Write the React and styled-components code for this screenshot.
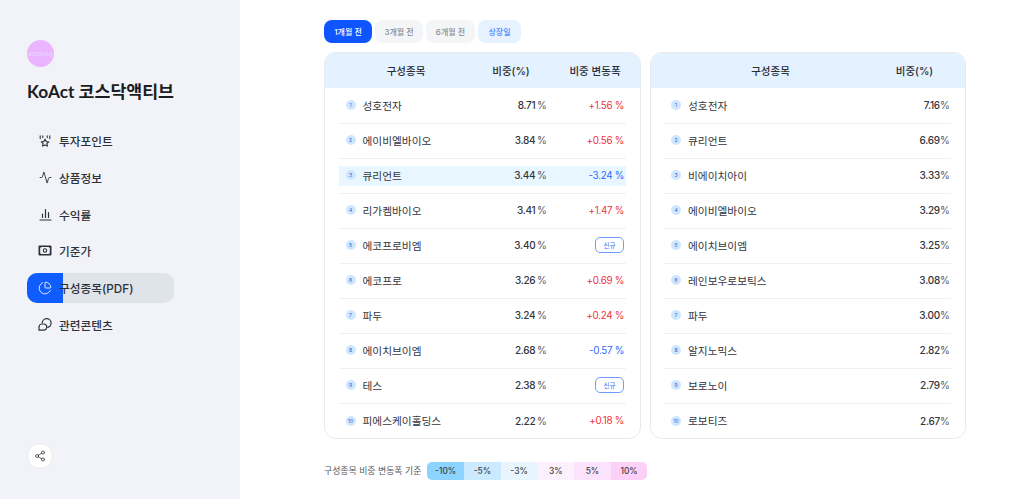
import React from 'react';
import styled, { createGlobalStyle } from 'styled-components';
import { Activity, ChartPie, Share2 } from 'lucide-react';

const GlobalStyle = createGlobalStyle`
  html, body {
    margin: 0;
    padding: 0;
    height: 100%;
    background: #fff;
    font-family: Inter, "Noto Sans CJK KR", sans-serif;
    color: #222;
  }
  #root { height: 100%; }
  * { box-sizing: border-box; }
`;

const Page = styled.div`
  display: flex;
  width: 1024px;
  height: 499px;
  overflow: hidden;
`;

const Sidebar = styled.aside`
  width: 240px;
  flex: none;
  background: #f1f3f9;
  padding: 40px 27px 0;
  display: flex;
  flex-direction: column;
`;

const Badge = styled.div`
  width: 27px;
  height: 27px;
  border-radius: 50%;
  background: #ebb4fe;
  color: #e6d6ff;
  font-family: "Liberation Sans", sans-serif;
  font-size: 5.6px;
  font-weight: 700;
  display: flex;
  align-items: center;
  justify-content: center;
`;

const Title = styled.h1`
  margin: 12px 0 0;
  font-family: Lato, "Noto Sans CJK KR", sans-serif;
  font-size: 17.3px;
  line-height: 25px;
  font-weight: 700;
  color: #1d1d1f;
  white-space: nowrap;
`;

const Nav = styled.nav`
  margin-top: 21.5px;
  display: flex;
  flex-direction: column;
  gap: 6.8px;
`;

const NavItem = styled.div`
  position: relative;
  display: flex;
  align-items: center;
  gap: 7px;
  width: 147px;
  height: 30px;
  padding-left: 11px;
  border-radius: 10px;
  font-size: 11.7px;
  font-weight: 500;
  color: #2d3138;
  white-space: nowrap;
  background: ${p => (p.$active ? '#dfe3ea' : 'transparent')};
`;

const ActiveMark = styled.span`
  position: absolute;
  left: 0;
  top: 0;
  width: 36px;
  height: 30px;
  background: #0f5cff;
  border-radius: 10px 0 0 10px;
`;

const NavIcon = styled.span`
  position: relative;
  width: 14px;
  flex: none;
  display: flex;
  justify-content: center;
  color: ${p => (p.$active ? '#fff' : '#2d3138')};

  svg {
    flex: none;
  }
`;

const NavLabel = styled.span`
  position: relative;
`;

const ShareButton = styled.button`
  margin-top: auto;
  margin-bottom: 30px;
  width: 26px;
  height: 26px;
  padding: 0;
  border: 1px solid #e8eaf0;
  border-radius: 50%;
  background: #fff;
  color: #333;
  display: flex;
  align-items: center;
  justify-content: center;
`;

const Main = styled.main`
  flex: 1;
  padding: 20px 0 0 84px;
`;

const Tabs = styled.div`
  display: flex;
  gap: 3px;
  height: 23px;
`;

const Tab = styled.div`
  height: 23px;
  width: ${p => p.$width}px;
  border-radius: 8px;
  display: flex;
  align-items: center;
  justify-content: center;
  font-size: 8px;
  font-weight: 500;
  background: ${p => (p.$kind === 'active' ? '#0f55ff' : p.$kind === 'info' ? '#e6f2ff' : '#f4f5f7')};
  color: ${p => (p.$kind === 'active' ? '#fff' : p.$kind === 'info' ? '#4f8cff' : '#8a8d93')};
`;

const Tables = styled.div`
  display: flex;
  gap: 9px;
  margin-top: 9px;
`;

const Card = styled.section`
  width: ${p => p.$width}px;
  height: 387px;
  border: 1px solid #e6e9ee;
  border-radius: 12px;
  overflow: hidden;
`;

const HeaderRow = styled.div`
  height: 35px;
  background: #e4f1ff;
  display: grid;
  grid-template-columns: ${p => p.$cols};
  align-items: center;
  padding-left: 14px;
  font-size: 10.5px;
  font-weight: 500;
  color: #2a2d33;
`;

const HeadCell = styled.div`
  text-align: center;
  white-space: nowrap;
`;

const Body = styled.div`
  padding: 1px 13.5px 0;
`;

const Row = styled.div`
  height: 35px;
  display: flex;
  align-items: center;
  border-bottom: ${p => (p.$last ? 'none' : '1px solid #eef0f3')};
`;

const RowInner = styled.div`
  flex: 1;
  height: ${p => (p.$highlight ? '20px' : 'auto')};
  padding-bottom: 2px;
  display: grid;
  grid-template-columns: ${p => p.$cols};
  align-items: center;
  background: ${p => (p.$highlight ? '#e8f6ff' : 'transparent')};
`;

const NameCell = styled.div`
  display: flex;
  align-items: center;
  gap: 7px;
  padding-left: 7px;
  font-size: 10.7px;
  color: #33363c;
  white-space: nowrap;
`;

const Rank = styled.span`
  width: 10px;
  height: 10px;
  border-radius: 50%;
  background: #cfe6ff;
  color: #2f5fd0;
  font-size: 5px;
  display: flex;
  align-items: center;
  justify-content: center;
  flex: none;
`;

const Weight = styled.div`
  text-align: right;
  padding-right: ${p => p.$inset || 0}px;
  font-size: 10px;
  font-weight: 500;
  letter-spacing: -0.25px;
  color: #33363c;
  white-space: nowrap;
`;

const Unit = styled.span`
  margin-left: ${p => p.$gap}px;
  font-weight: 400;
  color: #55585f;
`;

const Change = styled.div`
  display: flex;
  justify-content: flex-end;
  padding-right: 2px;
  font-size: 9.8px;
  letter-spacing: -0.3px;
  white-space: nowrap;
  color: ${p => (p.$down ? '#2c6bff' : '#f0323c')};
`;

const NewTag = styled.span`
  width: 29px;
  height: 16px;
  border: 1px solid #6f9dff;
  border-radius: 5px;
  background: #fff;
  color: #2c6bff;
  font-size: 6.5px;
  letter-spacing: 0;
  display: flex;
  align-items: center;
  justify-content: center;
`;

const Legend = styled.div`
  margin-top: 23px;
  display: flex;
  align-items: center;
  gap: 6px;
`;

const LegendLabel = styled.span`
  font-size: 8.9px;
  color: #555960;
  white-space: nowrap;
  padding-bottom: 1px;
`;

const Scale = styled.div`
  display: flex;
  height: 18px;
  border-radius: 5px;
  overflow: hidden;
`;

const Step = styled.span`
  width: 36.7px;
  background: ${p => p.$bg};
  color: #3a3d44;
  font-size: 8.4px;
  font-weight: 500;
  display: flex;
  align-items: center;
  justify-content: center;
`;

const PointIcon = () => (
  <svg width="12" height="12" viewBox="0 0 12 12" fill="none" stroke="currentColor" strokeWidth="1.1" strokeLinecap="round" strokeLinejoin="round">
    <path d="M1.200.8v2.800M10.800.8v2.800M3.800.8v1.800M8.200.8v1.800" />
    <path d="M6 4.300l1.200 2.300 2.500.3-1.800 1.700.5 2.500L6 9.900l-2.400 1.200.5-2.500-1.800-1.700 2.500-.3z" />
  </svg>
);

const BarsIcon = () => (
  <svg width="13" height="13" viewBox="0 0 13 13" fill="none" stroke="currentColor" strokeWidth="1.2" strokeLinecap="round">
    <path d="M1 12h11M3.500 9.500V6M6.500 9.500V1.500M9.500 9.500V4.500" />
  </svg>
);

const CashIcon = () => (
  <svg width="14" height="11" viewBox="0 0 14 11" fill="none">
    <rect x=".5" y=".5" width="13" height="10" rx="1" fill="currentColor" />
    <rect x="2.200" y="2.100" width="9.600" height="6.800" rx="1.500" fill="#f1f3f9" />
    <circle cx="7" cy="5.500" r="1.700" stroke="currentColor" strokeWidth="1.100" />
  </svg>
);

const ContentIcon = () => (
  <svg width="14" height="13" viewBox="0 0 14 13" fill="none" stroke="currentColor" strokeWidth="1.2" strokeLinejoin="round">
    <path d="M4.300 5.200a4.400 4.400 0 1 1 5 4.200" />
    <path d="M1 12.200V9a3 3 0 0 1 3-3h1.600a3.100 3.100 0 0 1 0 6.200z" />
  </svg>
);

const navItems = [
  { label: '투자포인트', icon: <PointIcon /> },
  { label: '상품정보', icon: <Activity size={13} strokeWidth={1.7} /> },
  { label: '수익률', icon: <BarsIcon /> },
  { label: '기준가', icon: <CashIcon /> },
  { label: '구성종목(PDF)', icon: <ChartPie size={14} strokeWidth={1.5} />, active: true },
  { label: '관련콘텐츠', icon: <ContentIcon /> },
];

const leftRows = [
  ['성호전자', '8.71', '+1.56 %'],
  ['에이비엘바이오', '3.84', '+0.56 %'],
  ['큐리언트', '3.44', '-3.24 %'],
  ['리가켐바이오', '3.41', '+1.47 %'],
  ['에코프로비엠', '3.40', 'new'],
  ['에코프로', '3.26', '+0.69 %'],
  ['파두', '3.24', '+0.24 %'],
  ['에이치브이엠', '2.68', '-0.57 %'],
  ['테스', '2.38', 'new'],
  ['피에스케이홀딩스', '2.22', '+0.18 %'],
];

const rightRows = [
  ['성호전자', '7.16'],
  ['큐리언트', '6.69'],
  ['비에이치아이', '3.33'],
  ['에이비엘바이오', '3.29'],
  ['에이치브이엠', '3.25'],
  ['레인보우로보틱스', '3.08'],
  ['파두', '3.00'],
  ['알지노믹스', '2.82'],
  ['보로노이', '2.79'],
  ['로보티즈', '2.67'],
];

const scale = [
  ['-10%', '#8dd3ff'],
  ['-5%', '#cbe9ff'],
  ['-3%', '#e8f5ff'],
  ['3%', '#fdf0fd'],
  ['5%', '#fce2fc'],
  ['10%', '#fdd0f8'],
];

export default function App() {
  return (
    <Page>
      <GlobalStyle />
      <Sidebar>
        <Badge>KOSDAQ</Badge>
        <Title>KoAct 코스닥액티브</Title>
        <Nav>
          {navItems.map(item => (
            <NavItem key={item.label} $active={item.active}>
              {item.active && <ActiveMark />}
              <NavIcon $active={item.active}>{item.icon}</NavIcon>
              <NavLabel>{item.label}</NavLabel>
            </NavItem>
          ))}
        </Nav>
        <ShareButton aria-label="공유">
          <Share2 size={12} strokeWidth={1.5} />
        </ShareButton>
      </Sidebar>
      <Main>
        <Tabs>
          <Tab $width={48} $kind="active">1개월 전</Tab>
          <Tab $width={48}>3개월 전</Tab>
          <Tab $width={49}>6개월 전</Tab>
          <Tab $width={43} $kind="info">상장일</Tab>
        </Tabs>
        <Tables>
          <Card $width={316.5}>
            <HeaderRow $cols="134px 76px 92px">
              <HeadCell>구성종목</HeadCell>
              <HeadCell>비중(%)</HeadCell>
              <HeadCell>비중 변동폭</HeadCell>
            </HeaderRow>
            <Body>
              {leftRows.map(([name, weight, change], i) => (
                <Row key={name} $last={i === leftRows.length - 1}>
                  <RowInner $cols="145px 63px 1fr" $highlight={i === 2}>
                    <NameCell><Rank>{i + 1}</Rank>{name}</NameCell>
                    <Weight>{weight}<Unit $gap={1.5}>%</Unit></Weight>
                    <Change $down={change.startsWith('-')}>
                      {change === 'new' ? <NewTag>신규</NewTag> : change}
                    </Change>
                  </RowInner>
                </Row>
              ))}
            </Body>
          </Card>
          <Card $width={316}>
            <HeaderRow $cols="212px 76px 1fr">
              <HeadCell>구성종목</HeadCell>
              <HeadCell>비중(%)</HeadCell>
            </HeaderRow>
            <Body>
              {rightRows.map(([name, weight], i) => (
                <Row key={name} $last={i === rightRows.length - 1}>
                  <RowInner $cols="1fr 70px">
                    <NameCell><Rank>{i + 1}</Rank>{name}</NameCell>
                    <Weight $inset={1.5}>{weight}<Unit $gap={0}>%</Unit></Weight>
                  </RowInner>
                </Row>
              ))}
            </Body>
          </Card>
        </Tables>
        <Legend>
          <LegendLabel>구성종목 비중 변동폭 기준</LegendLabel>
          <Scale>
            {scale.map(([label, bg]) => (
              <Step key={label} $bg={bg}>{label}</Step>
            ))}
          </Scale>
        </Legend>
      </Main>
    </Page>
  );
}
